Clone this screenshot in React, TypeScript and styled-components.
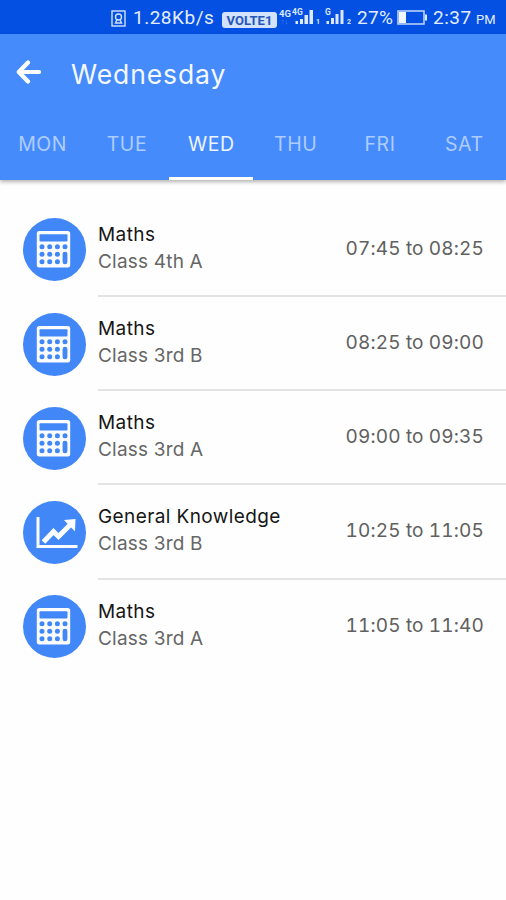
import React from "react";
import styled, { createGlobalStyle } from "styled-components";

const GlobalStyle = createGlobalStyle`
  * { box-sizing: border-box; }
  body { margin: 0; background: #fefefe; }
`;

const Screen = styled.div`
  width: 506px;
  height: 900px;
  overflow: hidden;
  display: flex;
  flex-direction: column;
  background: #fefefe;
  font-family: Inter, "Noto Sans", sans-serif;
`;

const StatusBar = styled.div`
  height: 34px;
  flex: none;
  display: flex;
  align-items: center;
  padding: 2px 0 0 111px;
  background: #0350e3;
  color: #e3edff;
  font-family: Roboto, sans-serif;
  font-size: 19px;
  line-height: 32px;
  white-space: nowrap;
  svg { display: block; flex: none; }
`;

const StatusText = styled.span<{ $width: number; $spacing?: number; $left?: number }>`
  width: ${(p) => p.$width}px;
  margin-left: ${(p) => p.$left ?? 0}px;
  letter-spacing: ${(p) => p.$spacing ?? 0}px;
  flex: none;
`;

const Meridiem = styled.span`
  font-size: 13px;
  margin-left: 4px;
  padding-top: 4px;
`;

const VolteBadge = styled.span`
  width: 55px;
  height: 16px;
  flex: none;
  margin: 4px 2px 0 0;
  border-radius: 3px;
  background: #d3e2fd;
  color: #2557b8;
  font-size: 13px;
  font-weight: 700;
  line-height: 17px;
  text-align: center;
`;

const Header = styled.header`
  height: 146px;
  flex: none;
  display: flex;
  flex-direction: column;
  background: #468bfc;
  box-shadow: 0 2px 4px rgba(0, 0, 0, 0.3);
`;

const Toolbar = styled.div`
  height: 75px;
  display: flex;
  align-items: center;
  padding-left: 16px;
  gap: 29px;
`;

const Title = styled.h1`
  margin: 0;
  padding-top: 5px;
  color: #f5f9ff;
  font-size: 26.5px;
  font-weight: 400;
  line-height: 36px;
  letter-spacing: 0.9px;
`;

const Tabs = styled.nav`
  flex: 1;
  display: grid;
  grid-template-columns: repeat(6, 1fr);
`;

const Tab = styled.button<{ $active: boolean }>`
  border: 0;
  border-bottom: 3px solid ${(p) => (p.$active ? "#ffffff" : "transparent")};
  padding: 1px 0 0 1px;
  background: none;
  color: ${(p) => (p.$active ? "#eef5ff" : "#aecdff")};
  font: 400 19.5px/26px Inter, sans-serif;
  letter-spacing: 0.6px;
`;

const Schedule = styled.main`
  padding-top: 22.9px;
`;

const Lesson = styled.div`
  height: 94.2px;
  display: flex;
  padding-left: 23px;
`;

const IconDisc = styled.div`
  width: 63px;
  height: 63px;
  flex: none;
  margin: 15.6px 12px 0 0;
  border-radius: 50%;
  background: #4287f8;
  svg { display: block; }
`;

const LessonBody = styled.div<{ $last: boolean }>`
  flex: 1;
  display: flex;
  justify-content: space-between;
  padding: 17.9px 22px 0 0;
  border-bottom: ${(p) => (p.$last ? "0" : "2px solid #e4e4e4")};
`;

const Subject = styled.div`
  color: #161616;
  font-size: 19px;
  line-height: 27px;
  letter-spacing: 0.4px;
`;

const ClassName = styled.div`
  color: #666;
  font-size: 19px;
  line-height: 27px;
  letter-spacing: 0.2px;
`;

const Time = styled.div`
  padding-top: 14px;
  color: #606060;
  font-size: 19px;
  line-height: 27px;
  letter-spacing: 0.15px;
  font-variant-numeric: tabular-nums;
`;

const KeyholeIcon = () => (
  <svg width="15" height="17" viewBox="0 0 15 17" fill="none" stroke="#d3e2fd" strokeWidth="1.4">
    <rect x="1" y="1" width="13" height="15" />
    <circle cx="7.5" cy="7" r="3" />
    <path d="M6 9.5 4.5 13h6L9 9.5" />
  </svg>
);

const SignalIcons = () => (
  <svg width="75" height="24" viewBox="279 5 75 24" fill="#dce8ff" fontFamily="Roboto, sans-serif" fontWeight="700">
    <text x="279" y="15.5" fontSize="9.5">4G</text>
    <text x="292" y="14" fontSize="8.5">4G</text>
    <text x="281" y="23" fontSize="7" opacity="0.35">↑↓</text>
    <path d="M295.5 20h2.5v3h-2.5zM300 18h3v5h-3zM304.5 14h3.5v9h-3.5zM309.5 9h3.5v14h-3.5z" />
    <text x="316" y="23" fontSize="7">1</text>
    <text x="325" y="14" fontSize="8.5">G</text>
    <path d="M326.5 20h2.500v3h-2.500zM331 17h3v6h-3zM335.5 13h3v10h-3zM340.5 9h3v14h-3z" />
    <text x="347" y="23" fontSize="7">2</text>
  </svg>
);

const BatteryIcon = () => (
  <svg width="31" height="16" viewBox="0 0 31 16">
    <rect x="1" y="1" width="26" height="13" fill="none" stroke="#b9d0fb" strokeWidth="1.6" />
    <path d="M2 2h7v11H2z" fill="#f3f8ff" />
    <path d="M28 4.5h2v6h-2z" fill="#dce8ff" />
  </svg>
);

const BackArrow = () => (
  <svg width="26" height="26" viewBox="0 0 26 26" fill="none" stroke="#fff" strokeWidth="4.2" strokeLinecap="round" strokeLinejoin="round">
    <path d="M12 3.5 2.8 13l9.2 9.5M3.5 13H23" />
  </svg>
);

const CalculatorIcon = () => (
  <svg width="63" height="63" viewBox="0 0 63 63">
    <rect x="13.8" y="13" width="33.4" height="36.5" rx="2.5" fill="#fafcff" />
    <g fill="#4287f8">
      <rect x="16.5" y="16.2" width="28" height="7.3" rx="1" />
      {[28.7, 36.2, 43.7].map((y) =>
        [19, 26.7, 34.4].map((x) => <circle key={`${x}-${y}`} cx={x} cy={y} r="2.5" />)
      )}
      <circle cx="42" cy="28.7" r="2.5" />
      <rect x="39.6" y="33.7" width="4.8" height="12.5" rx="2.3" />
    </g>
  </svg>
);

const TrendIcon = () => (
  <svg width="63" height="63" viewBox="0 0 63 63" fill="none" stroke="#fafcff">
    <path d="M15 16v29.5H54.5" strokeWidth="3" />
    <path d="M20.5 41 30.5 30.5l5 5L48 23" strokeWidth="5" />
    <path d="M41 19 52.5 18l-.5 12.5z" fill="#fafcff" stroke="none" />
  </svg>
);

const days = ["MON", "TUE", "WED", "THU", "FRI", "SAT"];

const lessons = [
  { subject: "Maths", group: "Class 4th A", time: "07:45 to 08:25" },
  { subject: "Maths", group: "Class 3rd B", time: "08:25 to 09:00" },
  { subject: "Maths", group: "Class 3rd A", time: "09:00 to 09:35" },
  { subject: "General Knowledge", group: "Class 3rd B", time: "10:25 to 11:05" },
  { subject: "Maths", group: "Class 3rd A", time: "11:05 to 11:40" },
];

export default function App() {
  return (
    <Screen>
      <GlobalStyle />
      <StatusBar>
        <KeyholeIcon />
        <StatusText $left={7} $width={89} $spacing={0.5}>1.28Kb/s</StatusText>
        <VolteBadge>VOLTE1</VolteBadge>
        <SignalIcons />
        <StatusText $left={3} $width={40} $spacing={0.3}>27%</StatusText>
        <BatteryIcon />
        <StatusText $left={5} $width={39} $spacing={0.5}>2:37</StatusText>
        <Meridiem>PM</Meridiem>
      </StatusBar>
      <Header>
        <Toolbar>
          <BackArrow />
          <Title>Wednesday</Title>
        </Toolbar>
        <Tabs>
          {days.map((day) => (
            <Tab key={day} $active={day === "WED"}>{day}</Tab>
          ))}
        </Tabs>
      </Header>
      <Schedule>
        {lessons.map((lesson, i) => (
          <Lesson key={lesson.time}>
            <IconDisc>{lesson.subject === "Maths" ? <CalculatorIcon /> : <TrendIcon />}</IconDisc>
            <LessonBody $last={i === lessons.length - 1}>
              <div>
                <Subject>{lesson.subject}</Subject>
                <ClassName>{lesson.group}</ClassName>
              </div>
              <Time>{lesson.time}</Time>
            </LessonBody>
          </Lesson>
        ))}
      </Schedule>
    </Screen>
  );
}
